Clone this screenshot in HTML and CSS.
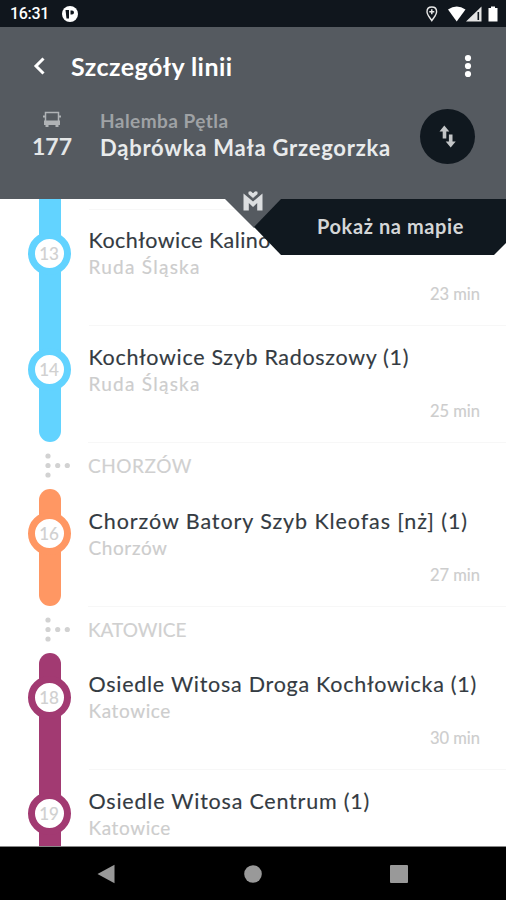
FILE: index.html
```
<!DOCTYPE html>
<html lang="pl">
    <head>
        <title>Szczegóły linii</title>
        <meta charset="UTF-8">
        <meta name="viewport" content="width=device-width, initial-scale=1">
        <link rel="stylesheet" href="styles.css">
    </head>
    <body>

        <div class="status">
            <span class="clock">16:31</span>
            <svg class="app-dot" width="16" height="16" viewBox="0 0 16 16">
                <circle cx="8" cy="8" r="8" fill="#fff"/>
                <path d="M3.500 4h3.500v8.500H4.500z" fill="#10161d"/>
                <path d="M8.500 4.500H10a2 2 0 0 1 0 4H8.500z" fill="#10161d"/>
            </svg>
            <svg class="status-icons" width="74" height="18" viewBox="0 0 74 18">
                <path d="M6.800 2C3.800 2 2 4 2 6.700c0 3 2.700 5.600 4.800 9 2.100-3.400 4.800-6 4.800-9C11.600 4 9.800 2 6.800 2z" fill="none" stroke="#e8e8e8" stroke-width="1.400"/>
                <path d="M6.800 4.300v5M4.300 6.800h5" stroke="#e8e8e8" stroke-width="1.500"/>
                <path d="M23 4.500Q31.700-1.500 40.500 4.500L31.700 16.500z" fill="#fff"/>
                <path d="M56.500 1.500v15H41z" fill="#e4e4e4"/>
                <path d="M53.300 7v8" stroke="#10161d" stroke-width="1.600"/>
                <path d="M63.500 3H66V1.500h4V3h2.500v13.500h-9z" fill="#fff"/>
            </svg>
        </div>

        <div class="header">
            <div class="toolbar">
                <svg class="back" width="14" height="18" viewBox="0 0 14 18">
                    <path d="M11.500 1.500L4 9l7.500 7.500" fill="none" stroke="#fff" stroke-width="3"/>
                </svg>
                <h1>Szczegóły linii</h1>
                <svg class="more" width="8" height="24" viewBox="0 0 8 24">
                    <g fill="#fff">
                        <circle cx="4" cy="4" r="3.100"/>
                        <circle cx="4" cy="12" r="3.100"/>
                        <circle cx="4" cy="20" r="3.100"/>
                    </g>
                </svg>
            </div>
            <div class="route">
                <div class="line">
                    <svg width="20" height="17" viewBox="0 0 20 17">
                        <path d="M3.500 10V1.500h13V10" fill="none" stroke="#b0b3b6" stroke-width="1.500"/>
                        <path d="M1 5.500h2M17 5.500h2" stroke="#b0b3b6" stroke-width="2"/>
                        <path d="M2 9.500h16v4.500h-1.500v2h-3v-2h-7v2h-3v-2H2z" fill="#b0b3b6"/>
                    </svg>
                    <span class="number">177</span>
                </div>
                <div class="ends">
                    <div class="from">Halemba Pętla</div>
                    <div class="to">Dąbrówka Mała Grzegorzka</div>
                </div>
                <div class="swap">
                    <svg width="17" height="23" viewBox="0 0 17 23">
                        <path d="M5.300 0.500l5 6H7.300v7h-3.600v-7H0.500zM11.700 22.500l-5-6h3.200v-7h3.600v7h3.200z" fill="#c3c5c7"/>
                    </svg>
                </div>
            </div>
            <!-- notch with the logo, map button next to it -->
            <svg class="notch" width="58" height="42" viewBox="0 0 58 42">
                <path d="M0 13h58L29 42z" fill="#555a60"/>
                <path d="M18.500 24.500V7.500L28 15.500l9.500-8v17h-5.300v-7.500L28 21l-4.200-4v7.500z" fill="#dcdee0"/>
                <path d="M28 12.500l-4.500-4c-1.500-2 .5-4.500 2.700-3.200L28 6.800l1.800-1.500c2.200-1.300 4.200 1.200 2.700 3.200z" fill="#dcdee0" stroke="#555a60" stroke-width="0.800"/>
            </svg>
            <div class="map-button">Pokaż na mapie</div>
        </div>

        <div class="list">
            <div class="stop blue first">
                <div class="track"><span class="dot">13</span></div>
                <div class="info">
                    <div class="name n13">Kochłowice Kalinowa</div>
                    <div class="city ruda">Ruda Śląska</div>
                    <div class="time">23 min</div>
                </div>
            </div>
            <div class="stop blue end">
                <div class="track"><span class="dot">14</span></div>
                <div class="info">
                    <div class="name n14">Kochłowice Szyb Radoszowy (1)</div>
                    <div class="city ruda">Ruda Śląska</div>
                    <div class="time">25 min</div>
                </div>
            </div>
            <div class="town">
                <svg width="26" height="25" viewBox="0 0 26 25">
                    <g fill="#d2d2d2">
                        <circle cx="3" cy="3" r="2.600"/>
                        <circle cx="3" cy="12.500" r="2.600"/>
                        <circle cx="3" cy="22" r="2.600"/>
                        <circle cx="12.700" cy="12.500" r="2.600"/>
                        <circle cx="22.300" cy="12.500" r="2.600"/>
                    </g>
                </svg>
                <span class="chorzow">CHORZÓW</span>
            </div>
            <div class="stop orange start end">
                <div class="track"><span class="dot">16</span></div>
                <div class="info">
                    <div class="name n16">Chorzów Batory Szyb Kleofas [nż] (1)</div>
                    <div class="city">Chorzów</div>
                    <div class="time">27 min</div>
                </div>
            </div>
            <div class="town">
                <svg width="26" height="25" viewBox="0 0 26 25">
                    <g fill="#d2d2d2">
                        <circle cx="3" cy="3" r="2.600"/>
                        <circle cx="3" cy="12.500" r="2.600"/>
                        <circle cx="3" cy="22" r="2.600"/>
                        <circle cx="12.700" cy="12.500" r="2.600"/>
                        <circle cx="22.300" cy="12.500" r="2.600"/>
                    </g>
                </svg>
                <span>KATOWICE</span>
            </div>
            <div class="stop purple start">
                <div class="track"><span class="dot">18</span></div>
                <div class="info">
                    <div class="name n18">Osiedle Witosa Droga Kochłowicka (1)</div>
                    <div class="city">Katowice</div>
                    <div class="time">30 min</div>
                </div>
            </div>
            <div class="stop purple">
                <div class="track"><span class="dot">19</span></div>
                <div class="info">
                    <div class="name n19">Osiedle Witosa Centrum (1)</div>
                    <div class="city">Katowice</div>
                </div>
            </div>
        </div>

        <div class="nav">
            <svg width="18" height="20" viewBox="0 0 18 20"><path d="M0.500 10L17.500 0.800v18.400z" fill="#999"/></svg>
            <svg width="18" height="18" viewBox="0 0 18 18"><circle cx="9" cy="9" r="8.800" fill="#999"/></svg>
            <svg width="18" height="18" viewBox="0 0 18 18"><rect width="18" height="18" rx="1" fill="#999"/></svg>
        </div>

    </body>
</html>
```
FILE: styles.css
```
* {
    box-sizing: border-box;
}
body {
    margin: 0;
    height: 900px;
    display: flex;
    flex-direction: column;
    overflow: hidden;
    background: #fff;
    font-family: Lato, sans-serif;
    white-space: nowrap;
}
svg {
    display: block;
    flex: none;
}
.status {
    height: 27px;
    flex: none;
    display: flex;
    align-items: center;
    padding: 1px 7px 0 10px;
    background: #10161d;
}
.clock {
    width: 52px;
    font: 500 16px/20px Roboto, sans-serif;
    color: #fff;
    letter-spacing: -0.3px;
}
.status-icons {
    margin-left: auto;
}

.header {
    position: relative;
    z-index: 1;
    height: 172px;
    flex: none;
    background: #555a60;
    color: #fff;
}
.toolbar {
    display: flex;
    align-items: center;
    height: 78px;
    padding: 0 34px 0 32px;
}
.toolbar h1 {
    margin: 0 auto 0 25px;
    font-size: 25px;
    line-height: 32px;
    letter-spacing: 0.450px;
}
.route {
    display: flex;
    padding: 4px 31px 0 32px;
}
.line {
    width: 40px;
    display: flex;
    flex-direction: column;
    align-items: center;
    padding-top: 2px;
}
.number {
    font-size: 23px;
    line-height: 28px;
    font-weight: bold;
    color: #e4e6e7;
    margin-top: 4px;
}
.ends {
    flex: 1;
    padding-left: 28px;
}
.from {
    font-size: 19px;
    line-height: 23px;
    font-weight: bold;
    letter-spacing: 0.450px;
    color: #9fa2a5;
}
.to {
    font-size: 22px;
    line-height: 32px;
    font-weight: bold;
    letter-spacing: 0.760px;
    color: #e9ebec;
}
.swap {
    width: 55px;
    height: 55px;
    display: flex;
    align-items: center;
    justify-content: center;
    border-radius: 50%;
    background: #10181f;
}
.notch {
    position: absolute;
    left: 225px;
    top: 159px;
}
.map-button {
    position: absolute;
    left: 254px;
    top: 172px;
    width: 252px;
    height: 56px;
    padding-left: 63px;
    background: #10181f;
    clip-path: polygon(27px 0, 100% 0, 100% 44px, 240px 100%, 27px 100%, 0 28px);
    font-size: 20px;
    line-height: 54px;
    font-weight: bold;
    letter-spacing: 0.600px;
    color: #d4d6d7;
}

.list {
    flex: 1;
    min-height: 0;
    overflow: hidden;
    padding-top: 9.600px;
    border-bottom: 1px solid #888;
}
.stop {
    display: flex;
    height: 116.800px;
}
.track {
    position: relative;
    width: 22px;
    margin-left: 38.500px;
    flex: none;
    background: currentColor;
}
.first .track {
    margin-top: -10px;
    padding-top: 10px;
}
.start .track {
    border-top-left-radius: 11px;
    border-top-right-radius: 11px;
}
.end .track {
    border-bottom-left-radius: 11px;
    border-bottom-right-radius: 11px;
}
.blue { color: #62d3ff; }
.orange { color: #ff9763; }
.purple { color: #a23a72; }
.dot {
    display: flex;
    align-items: center;
    justify-content: center;
    width: 43px;
    height: 43px;
    margin: 23px 0 0 -11px;
    border: 7.500px solid #62d3ff;
    border-radius: 50%;
    background: #fff;
    color: #d0d0d0;
    font-size: 17px;
    -webkit-text-stroke: 0.150px;
}
.orange .dot { border-color: #ff9763; }
.purple .dot { border-color: #a23a72; }
.info {
    flex: 1;
    margin-left: 28px;
    padding: 16.600px 26px 0 0;
    border-top: 1px solid #f7f7f7;
    -webkit-text-stroke: 0.150px;
}
.start .info {
    border-color: transparent;
}
.name {
    font-size: 21.500px;
    line-height: 28px;
    letter-spacing: 0.670px;
    color: #343b42;
}
.n13 { letter-spacing: 0.450px; }
.n16 { letter-spacing: 0.920px; }
.n18 { letter-spacing: 0.730px; }
.n19 { letter-spacing: 0.780px; }
.city {
    font-size: 19px;
    line-height: 26px;
    letter-spacing: 0.600px;
    color: #cdcdcd;
}
.ruda {
    letter-spacing: 1.250px;
}
.time {
    font-size: 16.500px;
    line-height: 28px;
    text-align: right;
    color: #cdcdcd;
}
.town {
    display: flex;
    align-items: center;
    height: 46.800px;
    padding-left: 45px;
    font-size: 19px;
    color: #d0d0d0;
    -webkit-text-stroke: 0.150px;
}
.town span {
    flex: 1;
    margin-left: 17px;
    line-height: 46px;
    border-top: 1px solid #f7f7f7;
}
.town .chorzow {
    letter-spacing: 0.550px;
}

.nav {
    height: 53px;
    flex: none;
    display: flex;
    align-items: center;
    justify-content: space-between;
    padding: 0 98px 0 97px;
    background: #000;
}
```
